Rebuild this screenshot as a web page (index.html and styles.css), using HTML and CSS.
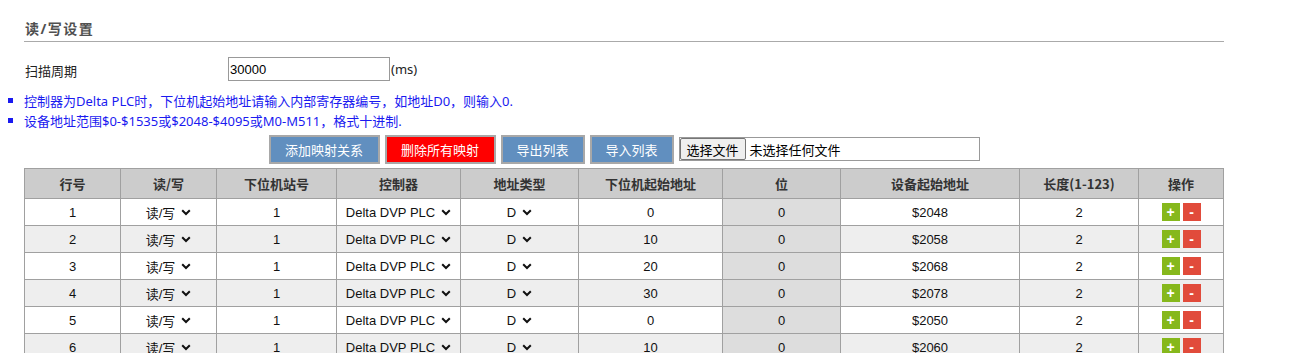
FILE: index.html
```html
<!DOCTYPE html>
<html lang="zh-CN">
<head>
    <meta charset="UTF-8">
    <title>读/写设置</title>
    <link rel="stylesheet" href="styles.css">
</head>
<body>
    <div class="page">
        <h2 class="section-title">读/写设置</h2>

        <div class="scan-row">
            <label for="scan_period" class="scan-label">扫描周期</label>
            <input type="text" id="scan_period" class="scan-input" value="30000">
            <span class="unit">(ms)</span>
        </div>

        <ul class="notes">
            <li>控制器为Delta PLC时，下位机起始地址请输入内部寄存器编号，如地址D0，则输入0.</li>
            <li>设备地址范围$0-$1535或$2048-$4095或M0-M511，格式十进制.</li>
        </ul>

        <div class="toolbar">
            <button type="button" class="tool-btn wide">添加映射关系</button>
            <button type="button" class="tool-btn wide danger">删除所有映射</button>
            <button type="button" class="tool-btn">导出列表</button>
            <button type="button" class="tool-btn">导入列表</button>
            <div class="file-box">
                <span class="file-btn">选择文件</span>
                <span class="file-name">未选择任何文件</span>
            </div>
        </div>

        <table class="map-table">
            <colgroup>
                <col style="width:96px">
                <col style="width:96px">
                <col style="width:120px">
                <col style="width:124px">
                <col style="width:118px">
                <col style="width:144px">
                <col style="width:118px">
                <col style="width:179px">
                <col style="width:119px">
                <col style="width:85px">
            </colgroup>
            <thead>
                <tr>
                    <th>行号</th>
                    <th>读/写</th>
                    <th>下位机站号</th>
                    <th>控制器</th>
                    <th>地址类型</th>
                    <th>下位机起始地址</th>
                    <th>位</th>
                    <th>设备起始地址</th>
                    <th>长度(1-123)</th>
                    <th>操作</th>
                </tr>
            </thead>
            <tbody id="map-body"></tbody>
        </table>
    </div>

    <script>
        const rows = [
            { start: 0, dev: '$2048' },
            { start: 10, dev: '$2058' },
            { start: 20, dev: '$2068' },
            { start: 30, dev: '$2078' },
            { start: 0, dev: '$2050' },
            { start: 10, dev: '$2060' }
        ];

        const chevron = '<svg class="chev" width="10" height="7" viewBox="0 0 10 7"><path d="M1.2 1.2 L5 5 L8.8 1.2" fill="none" stroke="#111" stroke-width="2"/></svg>';

        function fakeSelect(text) {
            return '<span class="fake-select">' + text + chevron + '</span>';
        }

        const body = document.getElementById('map-body');
        rows.forEach(function (r, i) {
            const tr = document.createElement('tr');
            tr.innerHTML =
                '<td>' + (i + 1) + '</td>' +
                '<td>' + fakeSelect('读/写') + '</td>' +
                '<td>1</td>' +
                '<td>' + fakeSelect('Delta DVP PLC') + '</td>' +
                '<td>' + fakeSelect('D') + '</td>' +
                '<td>' + r.start + '</td>' +
                '<td class="bit">0</td>' +
                '<td>' + r.dev + '</td>' +
                '<td>2</td>' +
                '<td><span class="ops"><span class="op add">+</span><span class="op del">-</span></span></td>';
            body.appendChild(tr);
        });
    </script>
</body>
</html>
```

FILE: styles.css
```css
:root {
    --title-color: #505050;
    --text-color: #222;
    --note-color: #1a1af0;
    --line-color: #aaa;
    --cell-border: #a0a0a0;
    --head-bg: #cccccc;
    --stripe-bg: #eeeeee;
    --bit-bg: #dddddd;
    --btn-blue: #618fbf;
    --btn-red: #ff0000;
    --op-green: #86b81c;
    --op-red: #e14b3b;
}

body {
    margin: 0;
    font-family: "Noto Sans", "Noto Sans CJK SC", sans-serif;
    font-size: 13px;
    color: var(--text-color);
    background: #fff;
}

.page {
    width: 1200px;
    padding-left: 24px;
}

.section-title {
    margin: 0;
    padding: 20px 0 3px 1px;
    font-size: 14px;
    line-height: 18px;
    letter-spacing: 1.5px;
    font-weight: bold;
    color: var(--title-color);
    border-bottom: 1px solid var(--line-color);
}

.scan-row {
    display: flex;
    align-items: center;
    margin-top: 15px;
    height: 24px;
}

.scan-label {
    width: 204px;
    padding-left: 1px;
    box-sizing: border-box;
    line-height: 24px;
    position: relative;
    top: 2px;
}

.scan-input {
    width: 162px;
    height: 24px;
    box-sizing: border-box;
    border: 1px solid #999;
    padding: 0 1px;
    font-family: "Liberation Sans", Arial, sans-serif;
    font-size: 13px;
    color: #000;
}

.unit {
    margin-left: 1px;
}

.notes {
    list-style: none;
    margin: 10px 0 0 -16px;
    padding: 0;
    color: var(--note-color);
}

.notes li {
    line-height: 20px;
}

.notes li::before {
    content: "";
    display: inline-block;
    width: 5px;
    height: 5px;
    background: var(--note-color);
    margin-right: 11px;
    vertical-align: 3px;
}

.toolbar {
    display: flex;
    justify-content: center;
    align-items: center;
    gap: 5px;
    margin-top: 3px;
    height: 30px;
}

.tool-btn {
    width: 84px;
    height: 29px;
    padding: 0;
    border: 2px solid #a8a8a8;
    background: var(--btn-blue);
    color: #fff;
    font-family: "Noto Sans CJK SC", sans-serif;
    font-size: 13px;
    cursor: pointer;
}

.tool-btn.wide {
    width: 111px;
}

.tool-btn.danger {
    background: var(--btn-red);
}

.file-box {
    display: flex;
    align-items: stretch;
    width: 301px;
    height: 24px;
    box-sizing: border-box;
    border: 1px solid #999;
}

.file-btn {
    display: flex;
    align-items: center;
    padding: 0 6px;
    background: #efefef;
    border: 1px solid #767676;
    border-radius: 2px;
    color: #000;
}

.file-name {
    display: flex;
    align-items: center;
    padding-left: 4px;
    color: #000;
}

.map-table {
    margin-top: 4px;
    width: 1199px;
    border-collapse: collapse;
    table-layout: fixed;
    font-family: "Liberation Sans", Arial, "Noto Sans CJK SC", sans-serif;
    font-size: 13px;
}

.map-table th,
.map-table td {
    border: 1px solid var(--cell-border);
    text-align: center;
    padding: 0;
    white-space: nowrap;
}

.map-table th {
    height: 29px;
    background: var(--head-bg);
    font-family: "Noto Sans CJK SC", sans-serif;
    font-weight: bold;
    color: #333;
}

.map-table td {
    height: 26px;
    color: #111;
}

.map-table tbody tr:nth-child(even) td {
    background: var(--stripe-bg);
}

.map-table td.bit,
.map-table tbody tr:nth-child(even) td.bit {
    background: var(--bit-bg);
}

.fake-select {
    display: inline-flex;
    align-items: center;
    gap: 6px;
}

.chev {
    display: block;
}

.ops {
    display: inline-flex;
    gap: 3px;
    vertical-align: middle;
}

.op {
    width: 18px;
    height: 18px;
    display: flex;
    align-items: center;
    justify-content: center;
    color: #fff;
    font-family: "Liberation Sans", Arial, sans-serif;
    font-size: 14px;
    font-weight: bold;
    line-height: 1;
}

.op.add {
    background: var(--op-green);
}

.op.del {
    background: var(--op-red);
}
```
